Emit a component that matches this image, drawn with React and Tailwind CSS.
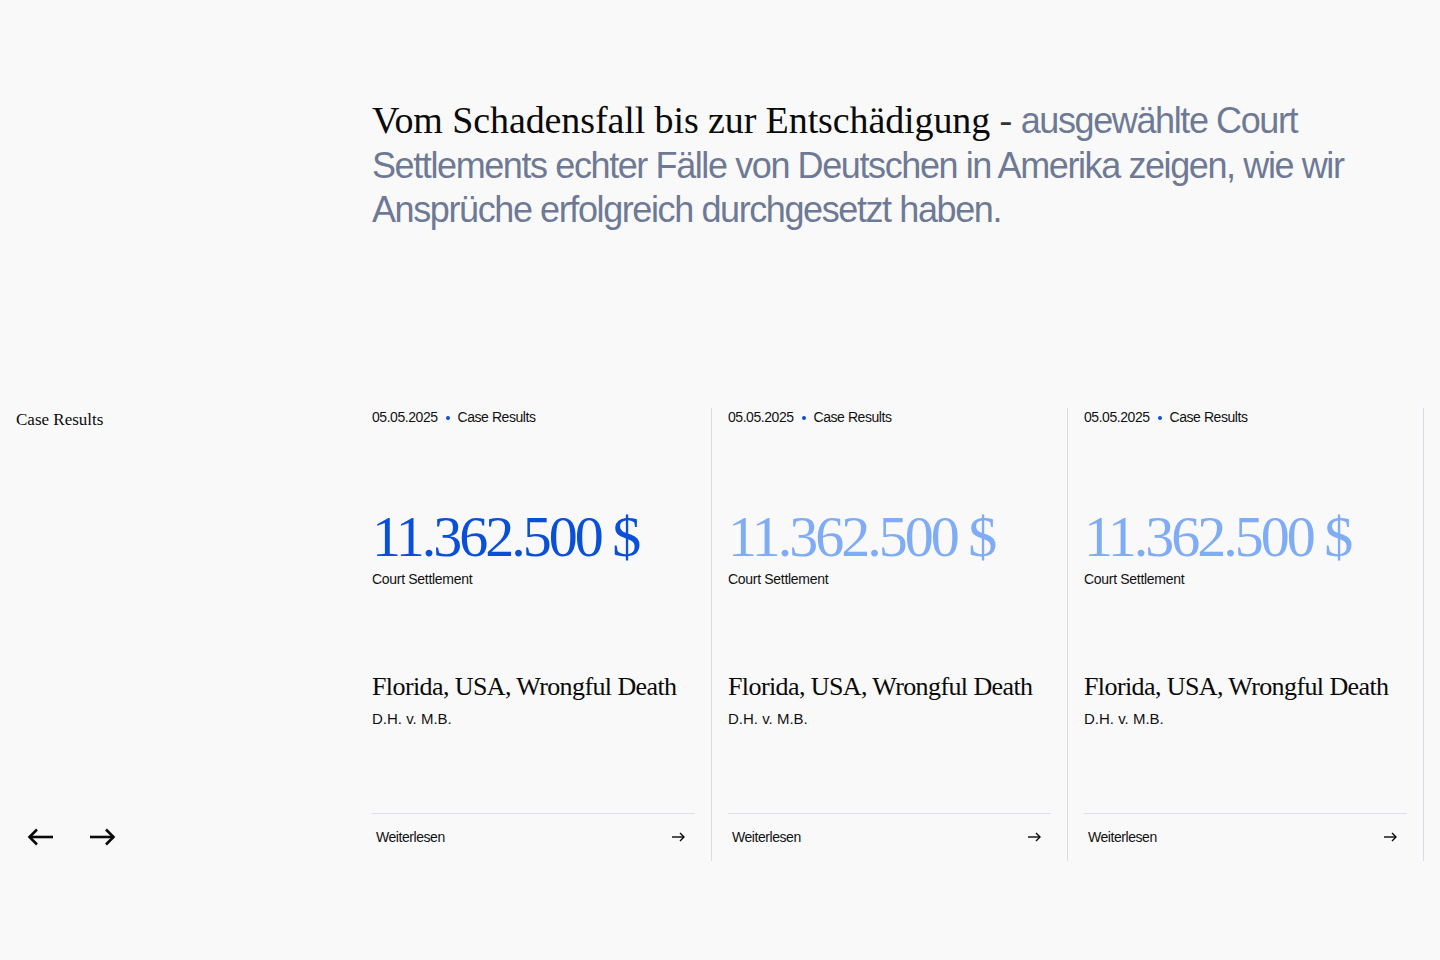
import React from "react";

const serif = { fontFamily: '"Liberation Serif", "DejaVu Serif", serif' };
const sans = { fontFamily: '"Liberation Sans", Arial, sans-serif' };

function BigArrow({ dir }) {
  return (
    <svg width="26" height="18" viewBox="0 0 26 18" fill="none" stroke="#0a0a0a" strokeWidth="2.6" strokeLinecap="butt" strokeLinejoin="miter">
      {dir === "left" ? (
        <>
          <path d="M2 9H26" />
          <path d="M10 1.5L2.5 9L10 16.5" />
        </>
      ) : (
        <>
          <path d="M0 9H24" />
          <path d="M16 1.5L23.5 9L16 16.5" />
        </>
      )}
    </svg>
  );
}

function SmallArrow() {
  return (
    <svg width="13" height="10" viewBox="0 0 13 10" fill="none" stroke="#0a0a0a" strokeWidth="1.4">
      <path d="M0 5H12" />
      <path d="M8 1L12 5L8 9" />
    </svg>
  );
}

function Card({ light }) {
  return (
    <div className="w-[356px] h-[453px] px-4 border-r border-[#d8dce4] flex flex-col">
      <div className="flex items-center h-5 text-[14px] text-[#111] tracking-[-0.45px]" style={sans}>
        <span>05.05.2025</span>
        <span className="mx-[8px] w-[4px] h-[4px] rounded-full bg-[#0b4fd8]" />
        <span>Case Results</span>
      </div>
      <div
        className={`mt-[80px] text-[58px] leading-[58px] tracking-[-3px] ${light ? "text-[#80acf5]" : "text-[#0a4fd8]"}`}
        style={serif}
      >
        11.362.500 $
      </div>
      <div className="mt-[3px] text-[14px] leading-5 text-[#111] tracking-[-0.3px]" style={sans}>
        Court Settlement
      </div>
      <div className="mt-[82px] text-[26px] leading-[32px] text-[#0a0a0a] tracking-[-0.6px]" style={serif}>
        Florida, USA, Wrongful Death
      </div>
      <div className="mt-[6px] text-[15px] leading-5 text-[#111]" style={sans}>
        D.H. v. M.B.
      </div>
      <div className="mt-auto h-[48px] border-t border-[#dde0e8] flex items-center justify-between pl-[4px] pr-[10px]">
        <span className="text-[14px] text-[#111] tracking-[-0.45px]" style={sans}>
          Weiterlesen
        </span>
        <SmallArrow />
      </div>
    </div>
  );
}

export default function App() {
  return (
    <div className="min-h-[960px] w-full bg-[#f9f9fa] pt-[99px]">
      <div className="pl-[372px] pr-[40px]">
        <p className="text-[36px] leading-[44.5px] text-[#6e7a95] tracking-[-1.4px]" style={sans}>
          <span className="text-[38px] leading-none text-[#0a0a0a] tracking-[-0.1px]" style={serif}>
            Vom Schadensfall bis zur Entschädigung <span className="text-[#333]">-</span>
          </span>{" "}
          ausgewählte Court
          <br />
          Settlements echter Fälle von Deutschen in Amerika zeigen, wie wir
          <br />
          Ansprüche erfolgreich durchgesetzt haben.
        </p>
      </div>
      <div className="mt-[175px] flex pl-4">
        <div className="w-[340px] h-[453px] flex flex-col justify-between">
          <div className="text-[17px] leading-6 text-[#0a0a0a]" style={serif}>
            Case Results
          </div>
          <div className="h-[48px] flex items-center gap-[37px] pl-[11px]">
            <BigArrow dir="left" />
            <BigArrow dir="right" />
          </div>
        </div>
        <div className="flex">
          <Card />
          <Card light />
          <Card light />
        </div>
      </div>
    </div>
  );
}
